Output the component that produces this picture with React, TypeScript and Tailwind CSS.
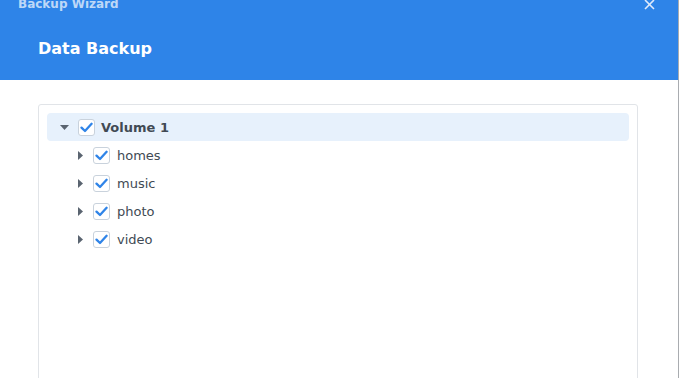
import React from "react";

const folders = ["homes", "music", "photo", "video"];

const Check = () => (
  <span className="flex h-[17px] w-[17px] shrink-0 items-center justify-center rounded-[3px] border border-[#c9d2dc] bg-white">
    <svg width="13" height="11" viewBox="0 0 13 11" fill="none">
      <path d="M1.5 5.6 5 9 11.6 1.8" stroke="#2f84e8" strokeWidth="2.3" strokeLinecap="round" strokeLinejoin="round" />
    </svg>
  </span>
);

const CaretDown = () => (
  <svg width="9" height="5" viewBox="0 0 9 5">
    <path d="M0 0h9L4.5 5z" fill="#5a6470" />
  </svg>
);

const CaretRight = () => (
  <svg width="5" height="9" viewBox="0 0 5 9">
    <path d="M0 0v9l5-4.5z" fill="#5a6470" />
  </svg>
);

export default function App() {
  return (
    <div className="flex h-[378px] w-[679px] overflow-hidden bg-white font-['DejaVu_Sans',sans-serif]">
      <div className="flex h-full w-[678px] flex-col">
        {/* header */}
        <div className="h-20 shrink-0 bg-[#2e84e8]">
          <div className="-mt-[4px] flex h-[16px] items-center justify-between pl-[18px] pr-[23px]">
            <span className="text-[12px] font-bold leading-none text-white/70">Backup Wizard</span>
            <svg width="11" height="11" viewBox="0 0 11 11">
              <path d="M1 1l9 9M10 1l-9 9" stroke="#dfeafb" strokeWidth="1.6" />
            </svg>
          </div>
          <h1 className="mt-[27px] pl-[38px] text-[16px] font-bold leading-5 text-white">Data Backup</h1>
        </div>

        {/* tree panel */}
        <div className="pl-[38px] pr-[40px] pt-6">
          <div className="h-[300px] rounded-[3px] border border-[#e1e4e8] p-2">
            <div className="flex h-7 items-center rounded-[4px] bg-[#e7f1fc] pl-[13px]">
              <CaretDown />
              <span className="ml-[9px]"><Check /></span>
              <span className="ml-[6px] pt-px text-[13px] font-bold text-[#414a54]">Volume 1</span>
            </div>
            {folders.map((f) => (
              <div key={f} className="flex h-7 items-center pl-[31px]">
                <CaretRight />
                <span className="ml-[10px]"><Check /></span>
                <span className="ml-[7px] pt-px text-[13px] text-[#414a54]">{f}</span>
              </div>
            ))}
          </div>
        </div>
      </div>
      <div className="h-full w-px bg-[#a9acb0]" />
    </div>
  );
}
